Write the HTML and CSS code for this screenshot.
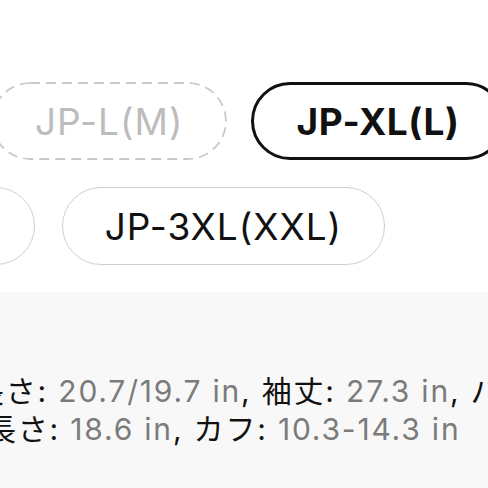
FILE: index.html
```html
<!DOCTYPE html>
<html lang="ja">
<head>
<meta charset="utf-8">
<title>サイズ</title>
<link rel="stylesheet" href="styles.css">
</head>
<body>
<section class="sizes">
  <div class="row row-1">
    <div class="pill pill-soldout">JP-L(M)</div>
    <div class="pill pill-selected">JP-XL(L)</div>
  </div>
  <div class="row row-2">
    <div class="pill pill-normal">JP-2XL(XL)</div>
    <div class="pill pill-normal">JP-3XL(XXL)</div>
  </div>
</section>
<section class="details">
  <div class="line line-1"><span class="label">長さ:</span> <span class="value">20.7/19.7 in</span><span class="label">,</span> <span class="label">袖丈:</span> <span class="value">27.3 in</span><span class="label">,</span> <span class="label">パンツ長さ</span></div>
  <div class="line line-2"><span class="label">長さ:</span> <span class="value">18.6 in</span><span class="label">,</span> <span class="label">カフ:</span> <span class="value">10.3-14.3 in</span></div>
</section>
</body>
</html>
```
FILE: styles.css
```css
html, body {
  margin: 0;
  padding: 0;
}
body {
  width: 488px;
  height: 488px;
  overflow: hidden;
  background: #ffffff;
  font-family: "Inter", "Noto Sans CJK JP", sans-serif;
  color: #111111;
}
.sizes {
  height: 292px;
  box-sizing: border-box;
  padding-top: 82px;
  display: flex;
  flex-direction: column;
  gap: 27px;
  overflow: hidden;
}
.row {
  display: flex;
  gap: 24px;
}
.row-1 {
  margin-left: -9px;
}
.row-2 {
  margin-left: -262px;
  gap: 27px;
}
.pill {
  flex-shrink: 0;
  height: 78px;
  box-sizing: border-box;
  border-radius: 39px;
  padding: 0 42px;
  display: flex;
  align-items: center;
  justify-content: center;
  font-size: 37px;
  letter-spacing: 1px;
  white-space: nowrap;
}
.pill-soldout {
  padding: 0 44px;
  color: #bcbcbc;
  background-image: url("data:image/svg+xml,%3Csvg xmlns='http://www.w3.org/2000/svg'%3E%3Crect x='1' y='1' rx='38' ry='38' style='width:calc(100%25 - 2px);height:calc(100%25 - 2px)' fill='none' stroke='%23c9c9c9' stroke-width='2' stroke-dasharray='10 6'/%3E%3C/svg%3E");
  background-repeat: no-repeat;
  background-size: 100% 100%;
}
.pill-selected {
  border: 3px solid #111111;
  font-weight: 700;
  letter-spacing: 0.6px;
}
.pill-normal {
  border: 1.5px solid #cfcfcf;
}
.details {
  height: 196px;
  box-sizing: border-box;
  padding-top: 80px;
  background: #f8f8f8;
  font-size: 30px;
  line-height: 38px;
  letter-spacing: 1.8px;
  overflow: hidden;
}
.line {
  white-space: nowrap;
  height: 38px;
}
.line-1 {
  margin-left: -26px;
}
.line-2 {
  margin-left: -14px;
}
.label {
  color: #111111;
}
.value {
  color: #7b7b7b;
}
```
